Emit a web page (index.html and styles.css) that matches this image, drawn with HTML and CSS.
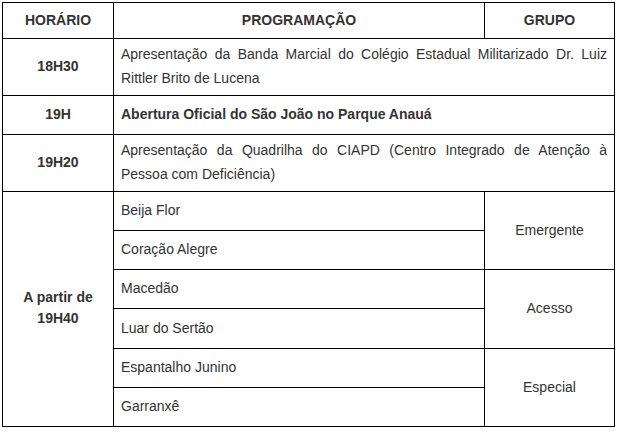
FILE: index.html
```html
<!DOCTYPE html>
<html lang="pt-BR">
<head>
<meta charset="utf-8">
<title>Programação</title>
<link rel="stylesheet" href="styles.css">
</head>
<body>
<table class="prog">
  <colgroup>
    <col class="c1">
    <col class="c2">
    <col class="c3">
  </colgroup>
  <tr class="h36">
    <th>HORÁRIO</th>
    <th>PROGRAMAÇÃO</th>
    <th>GRUPO</th>
  </tr>
  <tr class="h57">
    <td class="hora">18H30</td>
    <td class="desc" colspan="2">Apresentação da Banda Marcial do Colégio Estadual Militarizado Dr. Luiz Rittler Brito de Lucena</td>
  </tr>
  <tr class="h39">
    <td class="hora">19H</td>
    <td class="desc strong" colspan="2">Abertura Oficial do São João no Parque Anauá</td>
  </tr>
  <tr class="h57">
    <td class="hora">19H20</td>
    <td class="desc" colspan="2">Apresentação da Quadrilha do CIAPD (Centro Integrado de Atenção à Pessoa com Deficiência)</td>
  </tr>
  <tr class="h39">
    <td class="hora tight" rowspan="6">A partir de 19H40</td>
    <td class="desc">Beija Flor</td>
    <td class="grupo" rowspan="2">Emergente</td>
  </tr>
  <tr class="h39">
    <td class="desc">Coração Alegre</td>
  </tr>
  <tr class="h39">
    <td class="desc">Macedão</td>
    <td class="grupo" rowspan="2">Acesso</td>
  </tr>
  <tr class="h40">
    <td class="desc">Luar do Sertão</td>
  </tr>
  <tr class="h39">
    <td class="desc">Espantalho Junino</td>
    <td class="grupo" rowspan="2">Especial</td>
  </tr>
  <tr class="h39">
    <td class="desc">Garranxê</td>
  </tr>
</table>
</body>
</html>
```
FILE: styles.css
```css
body {
  margin: 0;
  background: #ffffff;
}

.prog {
  margin: 2px 0 0 2px;
  border-collapse: collapse;
  table-layout: fixed;
  width: 613px;
  font-family: "Liberation Sans", Arial, sans-serif;
  font-size: 14px;
  line-height: 24px;
  color: #333333;
}

.c1 { width: 111px; }
.c2 { width: 371px; }
.c3 { width: 130px; }

.prog th,
.prog td {
  border: 1px solid #000000;
  padding: 3px 7px 5px;
  vertical-align: middle;
}

.prog th {
  font-weight: bold;
  text-align: center;
}

.h36 { height: 36px; }
.h39 { height: 39px; }
.h40 { height: 40px; }
.h57 { height: 57px; }

.hora {
  font-weight: bold;
  text-align: center;
}

.tight {
  line-height: 21px;
}

.desc {
  text-align: justify;
}

.strong {
  font-weight: bold;
}

.grupo {
  text-align: center;
}
```
